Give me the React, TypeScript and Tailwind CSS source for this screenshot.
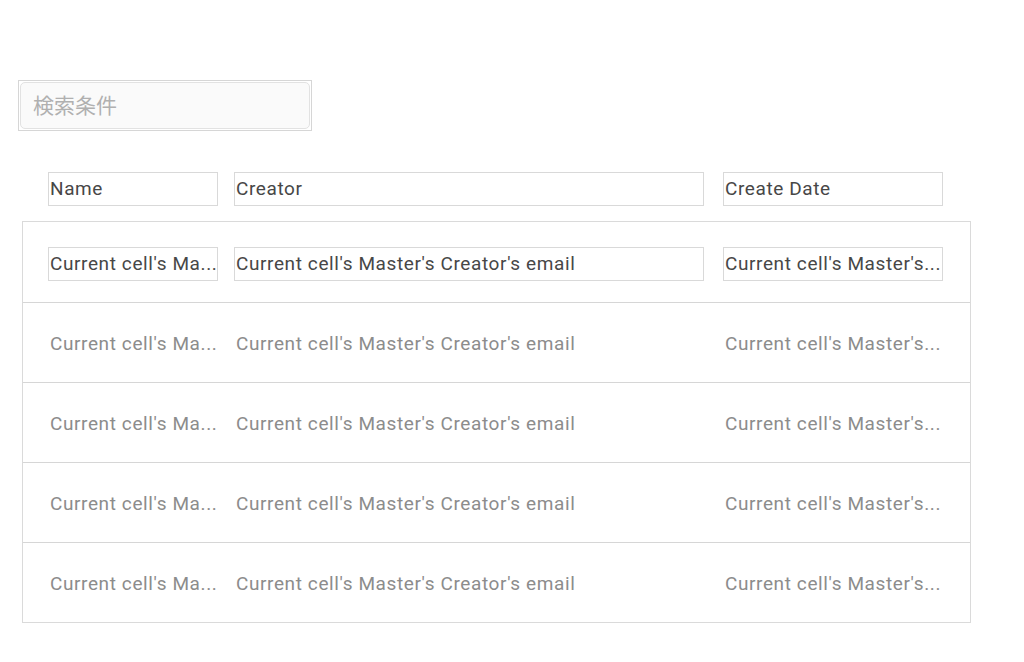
import React from 'react';

const rows = Array.from({ length: 5 }, (_, i) => ({
  id: i,
  name: "Current cell's Ma...",
  creator: "Current cell's Master's Creator's email",
  date: "Current cell's Master's...",
}));

const font = { fontFamily: 'Roboto, "Noto Sans CJK JP", sans-serif' };

const App: React.FC = () => {
  return (
    <div className="min-h-[662px] w-[1024px] bg-white pt-[80px] pl-[18px]" style={font}>
      <div className="w-[294px] h-[51px] border border-[#d6d6d6] p-[1px]">
        <input
          placeholder="検索条件"
          className="w-full h-full rounded-[5px] border border-[#e2e2e2] bg-[#fafafa] pl-[12px] text-[21px] text-[#555] placeholder:text-[#b0b0b0] outline-none"
        />
      </div>

      {/* column headers */}
      <div className="mt-[41px] pl-[30px] flex items-center text-[19px] tracking-[0.6px] text-[#474747]">
        <div className="w-[170px] h-[34px] border border-[#d9d9d9] pl-px flex items-center">Name</div>
        <div className="ml-[16px] w-[470px] h-[34px] border border-[#d9d9d9] pl-px flex items-center">Creator</div>
        <div className="ml-[19px] w-[220px] h-[34px] border border-[#d9d9d9] pl-px flex items-center">Create Date</div>
      </div>

      <div className="mt-[15px] ml-[4px] w-[949px] border border-[#dadada]">
        {rows.map((r, i) => (
          <div
            key={r.id}
            className={`h-[80px] pl-[25px] pt-[4px] flex items-center text-[19px] tracking-[0.6px] ${i > 0 ? 'border-t border-[#d6d6d6] text-[#8c8c8c]' : 'text-[#474747]'}`}
          >
            <div className={`w-[170px] h-[34px] pl-px flex items-center whitespace-nowrap ${i === 0 ? 'border border-[#d9d9d9]' : 'border border-transparent'}`}>
              {r.name}
            </div>
            <div className={`ml-[16px] w-[470px] h-[34px] pl-px flex items-center whitespace-nowrap ${i === 0 ? 'border border-[#d9d9d9]' : 'border border-transparent'}`}>
              {r.creator}
            </div>
            <div className={`ml-[19px] w-[220px] h-[34px] pl-px flex items-center whitespace-nowrap ${i === 0 ? 'border border-[#d9d9d9]' : 'border border-transparent'}`}>
              {r.date}
            </div>
          </div>
        ))}
      </div>
    </div>
  );
};

export default App;
